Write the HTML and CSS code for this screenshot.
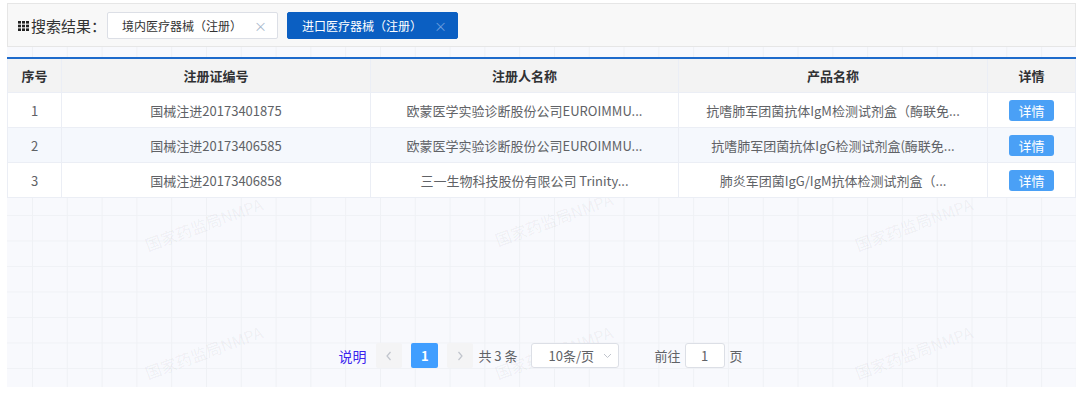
FILE: index.html
```html
<!DOCTYPE html>
<html lang="zh-CN">
<head>
    <meta charset="UTF-8">
    <title>搜索结果</title>
    <link rel="stylesheet" href="styles.css">
</head>
<body>

    <div class="search-bar">
        <span class="grid-icon">
            <svg width="12" height="10" viewBox="0 0 12 10">
                <rect x="0" y="0" width="3" height="2.6" fill="#222"/>
                <rect x="4" y="0" width="3" height="2.6" fill="#222"/>
                <rect x="8" y="0" width="3" height="2.6" fill="#222"/>
                <rect x="0" y="3.7" width="3" height="2.6" fill="#222"/>
                <rect x="4" y="3.7" width="3" height="2.6" fill="#222"/>
                <rect x="8" y="3.7" width="3" height="2.6" fill="#222"/>
                <rect x="0" y="7.4" width="3" height="2.6" fill="#222"/>
                <rect x="4" y="7.4" width="3" height="2.6" fill="#222"/>
                <rect x="8" y="7.4" width="3" height="2.6" fill="#222"/>
            </svg>
        </span>
        <span class="search-label">搜索结果：</span>
        <div class="tab">境内医疗器械（注册）<span class="tab-close">×</span></div>
        <div class="tab tab-active">进口医疗器械（注册）<span class="tab-close">×</span></div>
    </div>

    <div class="result-area">
        <span class="watermark wm-1">国家药监局NMPA</span>
        <span class="watermark wm-2">国家药监局NMPA</span>
        <span class="watermark wm-3">国家药监局NMPA</span>
        <span class="watermark wm-4">国家药监局NMPA</span>
        <span class="watermark wm-5">国家药监局NMPA</span>
        <span class="watermark wm-6">国家药监局NMPA</span>

        <table class="result-table">
            <tr>
                <th class="col-no">序号</th>
                <th class="col-code">注册证编号</th>
                <th class="col-owner">注册人名称</th>
                <th class="col-product">产品名称</th>
                <th class="col-detail">详情</th>
            </tr>
            <tr>
                <td>1</td>
                <td>国械注进20173401875</td>
                <td>欧蒙医学实验诊断股份公司EUROIMMU...</td>
                <td>抗嗜肺军团菌抗体IgM检测试剂盒（酶联免...</td>
                <td><button class="btn-detail">详情</button></td>
            </tr>
            <tr class="striped">
                <td>2</td>
                <td>国械注进20173406585</td>
                <td>欧蒙医学实验诊断股份公司EUROIMMU...</td>
                <td>抗嗜肺军团菌抗体IgG检测试剂盒(酶联免...</td>
                <td><button class="btn-detail">详情</button></td>
            </tr>
            <tr>
                <td>3</td>
                <td>国械注进20173406858</td>
                <td>三一生物科技股份有限公司 Trinity...</td>
                <td>肺炎军团菌IgG/IgM抗体检测试剂盒（...</td>
                <td><button class="btn-detail">详情</button></td>
            </tr>
        </table>

        <div class="pagination">
            <a class="note-link">说明</a>
            <button class="page-btn">
                <svg width="8" height="10" viewBox="0 0 8 10"><path d="M5.5 1 L2 5 L5.5 9" fill="none" stroke="#c0c4cc" stroke-width="1.2"/></svg>
            </button>
            <button class="page-btn page-active">1</button>
            <button class="page-btn">
                <svg width="8" height="10" viewBox="0 0 8 10"><path d="M2.5 1 L6 5 L2.5 9" fill="none" stroke="#c0c4cc" stroke-width="1.2"/></svg>
            </button>
            <span class="page-total">共 3 条</span>
            <div class="page-size">
                <span>10条/页</span>
                <svg width="9" height="6" viewBox="0 0 9 6"><path d="M1 1 L4.5 4.5 L8 1" fill="none" stroke="#c0c4cc" stroke-width="1"/></svg>
            </div>
            <span class="page-goto">前往</span>
            <div class="page-input">1</div>
            <span class="page-unit">页</span>
        </div>
    </div>

</body>
</html>
```

FILE: styles.css
```css
body {
    margin: 0;
    font-family: "Noto Sans CJK SC", "Noto Sans", sans-serif;
    background-color: #fff;
    color: #606266;
}

.search-bar {
    display: flex;
    align-items: center;
    height: 42px;
    margin: 3px 4px 0 7px;
    padding-left: 10px;
    border: 1px solid #e6e6e6;
    background-color: #f8f8f8;
}

.grid-icon {
    display: flex;
    margin-right: 1px;
    margin-top: 1px;
}

.search-label {
    font-size: 15px;
    color: #333;
    margin-right: 1px;
}

.tab {
    display: flex;
    align-items: center;
    height: 25px;
    padding: 0 10px 0 14px;
    margin-right: 9px;
    border: 1px solid #dcdfe6;
    border-radius: 2px;
    background-color: #fff;
    font-size: 12px;
    color: #333;
}

.tab-close {
    margin-left: 12px;
    font-size: 13px;
    color: #a9b7cc;
}

.tab-active {
    background-color: #0b5fc2;
    border-color: #0b5fc2;
    color: #fff;
    padding-left: 14px;
}

.tab-active .tab-close {
    color: #6f9fde;
}

.result-area {
    position: relative;
    overflow: hidden;
    height: 330px;
    margin: 0 4px 0 7px;
    padding-top: 10px;
    background-color: #f8f9fd;
    background-image:
        linear-gradient(to right, #eff1f5 1px, transparent 1px),
        linear-gradient(to bottom, #f0f2f6 1px, transparent 1px);
    background-size: 34.8px 100%, 100% 25.5px;
    background-position: 25px 0, 0 15px;
}

.watermark {
    position: absolute;
    font-size: 16px;
    color: rgba(0, 0, 0, 0.055);
    white-space: nowrap;
    transform: rotate(-20deg);
}

.wm-1 { left: 135px; top: 165px; }
.wm-2 { left: 485px; top: 160px; }
.wm-3 { left: 845px; top: 165px; }
.wm-4 { left: 135px; top: 293px; }
.wm-5 { left: 485px; top: 293px; }
.wm-6 { left: 845px; top: 293px; }

.result-table {
    position: relative;
    z-index: 1;
    width: 100%;
    border-collapse: collapse;
    border-top: 2px solid #1e6bcc;
    background-color: #fff;
    font-size: 13px;
}

.result-table th,
.result-table td {
    border: 1px solid #ebeef5;
    text-align: center;
    padding: 0;
    white-space: nowrap;
}

.result-table th {
    height: 33px;
    background-color: #f3f3f3;
    color: #303133;
    font-weight: bold;
}

.result-table td {
    height: 34px;
}

.result-table tr.striped td {
    background-color: #f5f8fd;
}

.col-no { width: 53px; }
.col-code { width: 308px; }
.col-owner { width: 307px; }
.col-product { width: 308px; }

.btn-detail {
    width: 45px;
    height: 21px;
    border: none;
    border-radius: 3px;
    background-color: #4aa0f6;
    color: #fff;
    font-family: inherit;
    font-size: 13px;
    padding: 0;
    vertical-align: middle;
}

.pagination {
    position: relative;
    z-index: 1;
    display: flex;
    align-items: center;
    justify-content: center;
    margin-top: 145px;
    font-size: 13px;
    padding-right: 2px;
}

.note-link {
    font-size: 14px;
    color: #3a24ee;
    margin-right: 10px;
}

.page-btn {
    display: flex;
    align-items: center;
    justify-content: center;
    width: 26px;
    height: 25px;
    margin-right: 9px;
    border: none;
    border-radius: 2px;
    background-color: #f4f4f5;
    font-family: inherit;
    font-size: 13px;
    font-weight: bold;
    padding: 0;
}

.page-active {
    width: 27px;
    background-color: #409eff;
    color: #fff;
}

.page-total {
    margin-left: -4px;
    margin-right: 13px;
}

.page-size {
    display: flex;
    align-items: center;
    justify-content: space-between;
    box-sizing: border-box;
    width: 88px;
    height: 25px;
    padding: 0 6px 0 17px;
    border: 1px solid #dcdfe6;
    border-radius: 3px;
    background-color: #fff;
    margin-right: 36px;
}

.page-goto {
    margin-right: 4px;
}

.page-input {
    box-sizing: border-box;
    width: 40px;
    height: 25px;
    line-height: 23px;
    border: 1px solid #dcdfe6;
    border-radius: 3px;
    background-color: #fff;
    text-align: center;
    margin-right: 5px;
}
```
